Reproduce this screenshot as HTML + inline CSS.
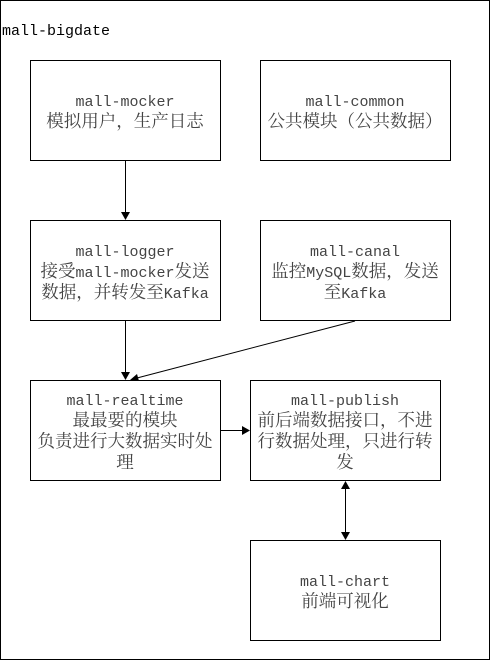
<!DOCTYPE html>
<html><head><style>body{margin:0;background:#fff}svg{display:block}
text{font-family:"Liberation Mono","Noto Serif CJK SC",monospace;font-size:17.5px;fill:#444;text-anchor:middle}
tspan.l{font-size:15px}</style></head>
<body>
<svg width="491" height="661" viewBox="0 0 491 661">
<rect x="0.5" y="0.5" width="489" height="659" fill="#fff" stroke="#000"/>
<text x="2" y="35" style="text-anchor:start;fill:#000;font-size:15px">mall-bigdate</text>
<g fill="#fff" stroke="#000">
<rect x="30.5" y="60.5" width="190" height="100"/>
<rect x="260.5" y="60.5" width="190" height="100"/>
<rect x="30.5" y="220.5" width="190" height="100"/>
<rect x="260.5" y="220.5" width="190" height="100"/>
<rect x="30.5" y="380.5" width="190" height="100"/>
<rect x="250.5" y="380.5" width="190" height="100"/>
<rect x="250.5" y="540.5" width="190" height="100"/>
</g>
<g stroke="#000" fill="none">
<line x1="125.5" y1="161" x2="125.5" y2="213"/>
<line x1="125.5" y1="321" x2="125.5" y2="373"/>
<line x1="355" y1="321" x2="137" y2="378"/>
<line x1="221" y1="430.5" x2="243" y2="430.5"/>
<line x1="345.5" y1="488" x2="345.5" y2="533"/>
</g>
<g fill="#000">
<path d="M121,212 L130,212 L125.5,220 Z"/>
<path d="M121,372 L130,372 L125.5,380 Z"/>
<path d="M130,380 L137,374 L139,381 Z"/>
<path d="M242,426 L242,435 L250,430.5 Z"/>
<path d="M341,489 L350,489 L345.5,481 Z"/>
<path d="M341,532 L350,532 L345.5,540 Z"/>
</g>
<text x="125" y="106"><tspan class="l">mall-mocker</tspan></text>
<text x="125" y="127">模拟用户，生产日志</text>
<text x="355" y="106"><tspan class="l">mall-common</tspan></text>
<text x="355" y="127">公共模块（公共数据）</text>
<text x="125" y="256"><tspan class="l">mall-logger</tspan></text>
<text x="125" y="277">接受<tspan class="l">mall-mocker</tspan>发送</text>
<text x="125" y="298">数据，并转发至<tspan class="l">Kafka</tspan></text>
<text x="355" y="256"><tspan class="l">mall-canal</tspan></text>
<text x="355" y="277">监控<tspan class="l">MySQL</tspan>数据，发送</text>
<text x="355" y="298">至<tspan class="l">Kafka</tspan></text>
<text x="125" y="405"><tspan class="l">mall-realtime</tspan></text>
<text x="125" y="426">最最要的模块</text>
<text x="125" y="447">负责进行大数据实时处</text>
<text x="125" y="468">理</text>
<text x="345" y="405"><tspan class="l">mall-publish</tspan></text>
<text x="345" y="426">前后端数据接口，不进</text>
<text x="345" y="447">行数据处理，只进行转</text>
<text x="345" y="468">发</text>
<text x="345" y="586"><tspan class="l">mall-chart</tspan></text>
<text x="345" y="607">前端可视化</text>
</svg>
</body></html>
